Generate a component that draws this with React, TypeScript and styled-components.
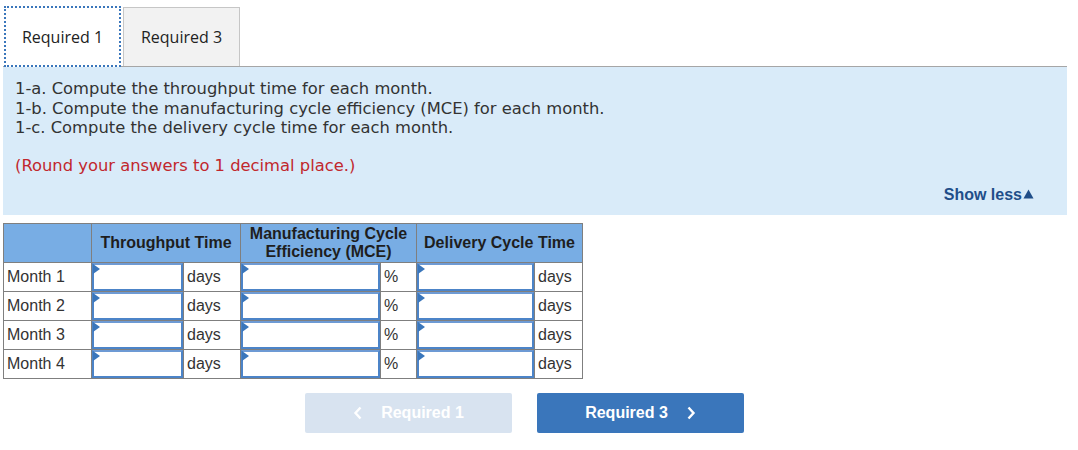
import React from 'react';
import styled, { createGlobalStyle } from 'styled-components';

const GlobalStyle = createGlobalStyle`
    body {
        margin: 0;
        background: #ffffff;
        font-family: "Liberation Sans", Arial, sans-serif;
    }
`;

const Page = styled.div`
    width: 1078px;
    height: 450px;
    padding: 5px 11px 0 3px;
    box-sizing: border-box;
`;

const TabBar = styled.div`
    display: flex;
    align-items: flex-end;
    gap: 2px;
    height: 61px;
    border-bottom: 1px solid #a6a6a6;
    padding-left: 1px;
`;

const Tab = styled.div<{ $active?: boolean }>`
    width: 117px;
    height: ${(p) => (p.$active ? '61px' : '59px')};
    box-sizing: border-box;
    display: flex;
    align-items: center;
    justify-content: center;
    font-family: "Open Sans", "Noto Sans", sans-serif;
    font-size: 16px;
    color: #222;
    background: ${(p) => (p.$active ? '#ffffff' : '#f2f2f2')};
    border: ${(p) => (p.$active ? '2px dotted #3a76bb' : '1px solid #c6c6c6')};
    border-bottom: ${(p) => (p.$active ? '2px dotted #3a76bb' : 'none')};
    margin-bottom: ${(p) => (p.$active ? '-1px' : '0')};
    position: relative;
    z-index: ${(p) => (p.$active ? 1 : 0)};
`;

const Panel = styled.div`
    background: #d9ebf9;
    height: 148px;
    padding: 12px 12px 0 12px;
    box-sizing: border-box;
    display: flex;
    flex-direction: column;
    font-family: "DejaVu Sans", Verdana, sans-serif;
    font-size: 16.35px;
    line-height: 19.5px;
    color: #333;
`;

const Note = styled.div`
    color: #c1272d;
    margin-top: 18px;
`;

const ShowLess = styled.div`
    margin-top: auto;
    margin-bottom: 11px;
    align-self: flex-end;
    margin-right: 21px;
    font-family: "Liberation Sans", Arial, sans-serif;
    font-weight: bold;
    font-size: 16px;
    color: #1f4e89;
    display: flex;
    align-items: center;
    gap: 1px;
`;

const Grid = styled.table`
    margin-top: 8px;
    border-collapse: collapse;
    table-layout: fixed;
    font-size: 16px;
    color: #333;
`;

const HeadCell = styled.th`
    background: #78ade4;
    border: 1px solid #7f7f7f;
    height: 38px;
    padding: 0;
    font-size: 16px;
    font-weight: bold;
    line-height: 18px;
    color: #1e1e1e;
    text-align: center;
`;

const LabelCell = styled.td`
    border: 1px solid #7f7f7f;
    height: 28px;
    padding: 0 0 0 3px;
    text-align: left;
    color: #333;
`;

const UnitCell = styled.td`
    border: 1px solid #7f7f7f;
    height: 28px;
    padding: 0 0 0 3px;
    color: #333;
`;

const InputCell = styled.td`
    border: 1px solid #7f7f7f;
    height: 28px;
    padding: 0;
`;

const Field = styled.div`
    height: 28px;
    box-sizing: border-box;
    border: 2px solid #4c84c8;
    border-top-color: #6d9ad4;
    background: #fff;
    position: relative;
`;

const Flag = styled.span`
    position: absolute;
    left: -1px;
    top: -1px;
    width: 0;
    height: 0;
    border-top: 5px solid transparent;
    border-bottom: 5px solid transparent;
    border-left: 7px solid #3a76bb;
`;

const Actions = styled.div`
    display: flex;
    gap: 25px;
    margin: 14px 0 0 302px;
`;

const NavButton = styled.div<{ $disabled?: boolean }>`
    width: 207px;
    height: 40px;
    border-radius: 2px;
    display: flex;
    align-items: center;
    justify-content: center;
    gap: 18px;
    font-family: "Liberation Sans", Arial, sans-serif;
    font-weight: bold;
    font-size: 16px;
    color: #fff;
    background: ${(p) => (p.$disabled ? '#d8e3f0' : '#3a76bb')};
`;

const Chevron = ({ dir }: { dir: 'left' | 'right' }) => (
    <svg width="10" height="14" viewBox="0 0 10 14">
        <path
            d={dir === 'left' ? 'M7.5 1.5 L2.5 7 L7.5 12.5' : 'M2.5 1.5 L7.5 7 L2.5 12.5'}
            fill="none"
            stroke="#fff"
            strokeWidth="2.4"
        />
    </svg>
);

const months = ['Month 1', 'Month 2', 'Month 3', 'Month 4'];

function Input() {
    return (
        <InputCell>
            <Field>
                <Flag />
            </Field>
        </InputCell>
    );
}

export default function App() {
    return (
        <Page>
            <GlobalStyle />
            <TabBar>
                <Tab $active>Required 1</Tab>
                <Tab>Required 3</Tab>
            </TabBar>
            <Panel>
                <div>1-a. Compute the throughput time for each month.</div>
                <div>1-b. Compute the manufacturing cycle efficiency (MCE) for each month.</div>
                <div>1-c. Compute the delivery cycle time for each month.</div>
                <Note>(Round your answers to 1 decimal place.)</Note>
                <ShowLess>
                    Show less
                    <svg width="11" height="10" viewBox="0 0 11 10">
                        <path d="M5.5 0.5 L10.5 9.5 L0.5 9.5 Z" fill="#1f4e89" />
                    </svg>
                </ShowLess>
            </Panel>
            <Grid>
                <colgroup>
                    <col style={{ width: 88 }} />
                    <col style={{ width: 92 }} />
                    <col style={{ width: 57 }} />
                    <col style={{ width: 140 }} />
                    <col style={{ width: 36 }} />
                    <col style={{ width: 118 }} />
                    <col style={{ width: 48 }} />
                </colgroup>
                <thead>
                    <tr>
                        <HeadCell />
                        <HeadCell colSpan={2}>Throughput Time</HeadCell>
                        <HeadCell colSpan={2}>
                            Manufacturing Cycle
                            <br />
                            Efficiency (MCE)
                        </HeadCell>
                        <HeadCell colSpan={2}>Delivery Cycle Time</HeadCell>
                    </tr>
                </thead>
                <tbody>
                    {months.map((m) => (
                        <tr key={m}>
                            <LabelCell>{m}</LabelCell>
                            <Input />
                            <UnitCell>days</UnitCell>
                            <Input />
                            <UnitCell>%</UnitCell>
                            <Input />
                            <UnitCell>days</UnitCell>
                        </tr>
                    ))}
                </tbody>
            </Grid>
            <Actions>
                <NavButton $disabled>
                    <Chevron dir="left" />
                    Required 1
                </NavButton>
                <NavButton>
                    Required 3
                    <Chevron dir="right" />
                </NavButton>
            </Actions>
        </Page>
    );
}
